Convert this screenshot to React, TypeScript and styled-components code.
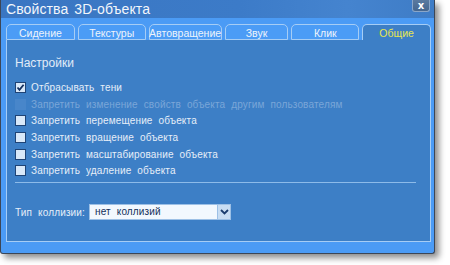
import React from 'react';
import styled, { createGlobalStyle } from 'styled-components';

const Global = createGlobalStyle`
  html, body {
    margin: 0;
    padding: 0;
    background: #ffffff;
  }
  * {
    box-sizing: border-box;
  }
`;

const Page = styled.div`
  width: 450px;
  height: 265px;
  padding: 0;
`;

const Window = styled.div`
  width: 435px;
  height: 254px;
  display: flex;
  flex-direction: column;
  background: #4b9bf5;
  border: 1px solid #3c4656;
  border-top: none;
  border-radius: 0 0 3px 3px;
  box-shadow: 4px 4px 6px rgba(0, 0, 0, 0.45);
  font-family: 'Liberation Sans', Arial, sans-serif;
`;

const TitleBar = styled.div`
  height: 18px;
  display: flex;
  align-items: flex-start;
  justify-content: space-between;
  background: linear-gradient(90deg, #3a76c2 0%, #3c7bc8 55%, #4584cf 80%, #3e7cc6 100%);
  padding: 0 4px 0 5px;
`;

const Title = styled.div`
  color: #f2f6fb;
  font-size: 14px;
  letter-spacing: 0.1px;
  word-spacing: 2px;
  line-height: 18px;
  white-space: nowrap;
`;

const CloseButton = styled.div`
  width: 18px;
  height: 12px;
  display: flex;
  align-items: center;
  justify-content: center;
  background: linear-gradient(#5a7aa0, #46678f);
  border: 1px solid #8aa6c8;
  border-top: none;
  border-radius: 0 0 3px 3px;
  color: #ffffff;
  font-family: 'DejaVu Sans', sans-serif;
  font-size: 10px;
  font-weight: bold;
  line-height: 10px;
`;

const Body = styled.div`
  flex: 1;
  display: flex;
  flex-direction: column;
  padding: 6px 3px 11px 5px;
`;

const TabRow = styled.div`
  display: flex;
  gap: 3px;
  height: 16px;
`;

const Tab = styled.div<{ $active?: boolean; $w: number }>`
  width: ${(p) => p.$w}px;
  height: 16px;
  display: flex;
  align-items: center;
  justify-content: center;
  background: ${(p) => (p.$active ? '#3d7fc6' : '#4b9cf6')};
  border: 1px solid #a6cdf5;
  border-bottom: ${(p) => (p.$active ? 'none' : '1px solid #a6cdf5')};
  border-radius: 5px 5px 0 0;
  color: ${(p) => (p.$active ? '#e6e650' : '#eef4fb')};
  font-size: 10.5px;
  line-height: 14px;
  padding-top: 1px;
  white-space: nowrap;
`;

const Panel = styled.div`
  flex: 1;
  display: flex;
  flex-direction: column;
  background: #3d7fc6;
  border: 1px solid #a6cdf5;
  border-top: none;
  padding: 16px 14px 0 8px;
`;

const Heading = styled.div`
  color: #e2ecf8;
  font-size: 12px;
  line-height: 15px;
  margin-bottom: 10px;
`;

const Options = styled.div`
  display: flex;
  flex-direction: column;
  gap: 3.7px;
`;

const Option = styled.div<{ $disabled?: boolean }>`
  display: flex;
  align-items: center;
  gap: 5px;
  height: 13px;
  color: ${(p) => (p.$disabled ? '#7aa6d8' : '#e6eef8')};
  font-size: 10px;
  letter-spacing: 0.15px;
  word-spacing: 3px;
  white-space: nowrap;
`;

const Box = styled.div<{ $disabled?: boolean }>`
  width: 11px;
  height: 11px;
  flex: none;
  display: flex;
  align-items: center;
  justify-content: center;
  background: ${(p) => (p.$disabled ? '#4886ca' : '#d8e8f9')};
  border: 1px solid ${(p) => (p.$disabled ? '#4886ca' : '#1f4476')};
`;

const Separator = styled.div`
  height: 1px;
  background: #8dbbe9;
  margin: 5px 0 0 0;
`;

const CollisionRow = styled.div`
  display: flex;
  align-items: center;
  margin-top: 21px;
  gap: 4px;
`;

const FieldLabel = styled.div`
  color: #e6eef8;
  font-size: 10px;
  letter-spacing: 0.15px;
  word-spacing: 3px;
  white-space: nowrap;
`;

const Select = styled.div`
  display: flex;
  height: 16px;
`;

const SelectValue = styled.div`
  width: 129px;
  height: 16px;
  background: #f2f8fe;
  border: 1px solid #9cc0e6;
  color: #12305a;
  font-size: 10px;
  letter-spacing: 0.15px;
  word-spacing: 3px;
  line-height: 14px;
  padding-left: 5px;
  white-space: nowrap;
`;

const SelectButton = styled.div`
  width: 13px;
  height: 16px;
  display: flex;
  align-items: center;
  justify-content: center;
  background: #c8ddf3;
  border: 1px solid #9cc0e6;
  border-left: none;
`;

const tabs: { label: string; w: number; active?: boolean }[] = [
  { label: 'Сидение', w: 69 },
  { label: 'Текстуры', w: 68 },
  { label: 'Автовращение', w: 73 },
  { label: 'Звук', w: 64 },
  { label: 'Клик', w: 68 },
  { label: 'Общие', w: 69, active: true },
];

const options: { label: string; checked?: boolean; disabled?: boolean }[] = [
  { label: 'Отбрасывать тени', checked: true },
  { label: 'Запретить изменение свойств объекта другим пользователям', disabled: true },
  { label: 'Запретить перемещение объекта' },
  { label: 'Запретить вращение объекта' },
  { label: 'Запретить масштабирование объекта' },
  { label: 'Запретить удаление объекта' },
];

function Check() {
  return (
    <svg width="9" height="9" viewBox="0 0 9 9">
      <path d="M1.5 4.5 L3.5 6.8 L7.6 1.8" fill="none" stroke="#14305e" strokeWidth="1.8" />
    </svg>
  );
}

export default function App() {
  return (
    <Page>
      <Global />
      <Window>
        <TitleBar>
          <Title>Свойства 3D-объекта</Title>
          <CloseButton>x</CloseButton>
        </TitleBar>
        <Body>
          <TabRow>
            {tabs.map((t) => (
              <Tab key={t.label} $w={t.w} $active={t.active}>
                {t.label}
              </Tab>
            ))}
          </TabRow>
          <Panel>
            <Heading>Настройки</Heading>
            <Options>
              {options.map((o) => (
                <Option key={o.label} $disabled={o.disabled}>
                  <Box $disabled={o.disabled}>{o.checked && <Check />}</Box>
                  {o.label}
                </Option>
              ))}
            </Options>
            <Separator />
            <CollisionRow>
              <FieldLabel>Тип коллизии:</FieldLabel>
              <Select>
                <SelectValue>нет коллизий</SelectValue>
                <SelectButton>
                  <svg width="9" height="6" viewBox="0 0 9 6">
                    <path d="M1 1 L4.5 4.5 L8 1" fill="none" stroke="#1a3c6e" strokeWidth="1.8" />
                  </svg>
                </SelectButton>
              </Select>
            </CollisionRow>
          </Panel>
        </Body>
      </Window>
    </Page>
  );
}
